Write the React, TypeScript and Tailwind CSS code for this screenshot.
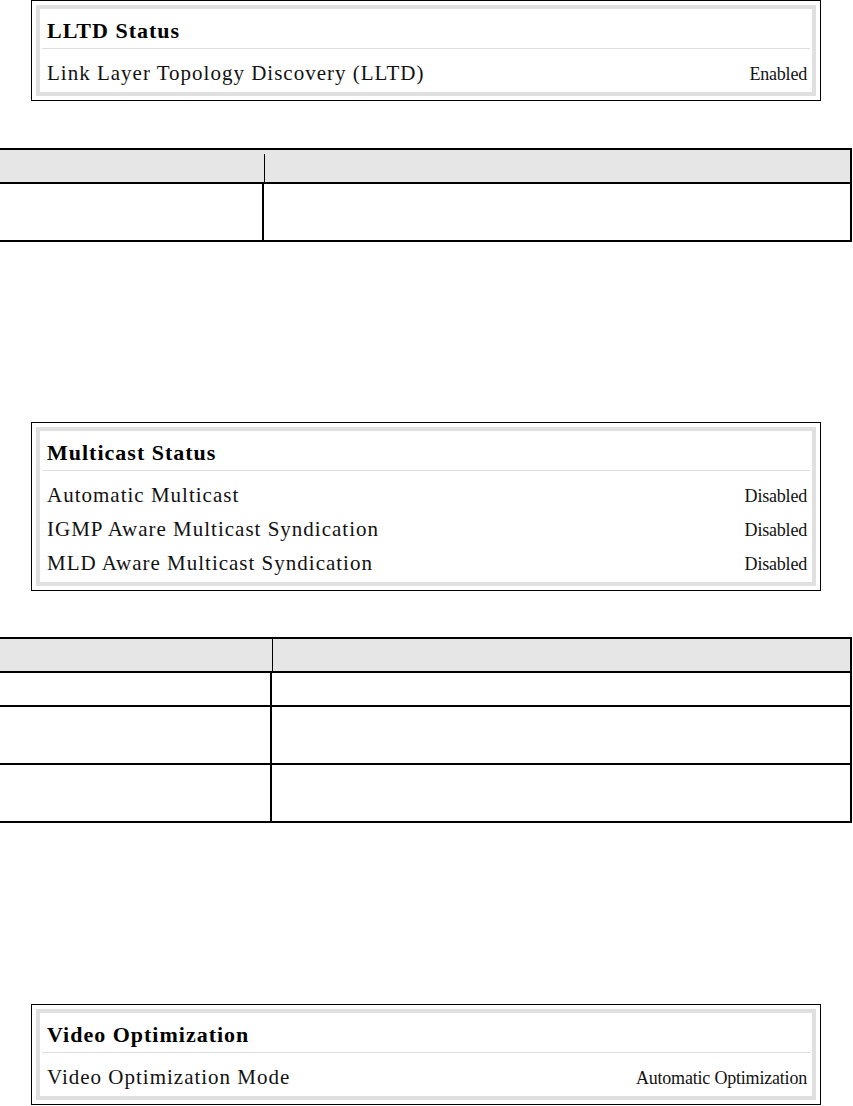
const serif = "font-['Liberation_Serif','Times_New_Roman',serif]";

type Row = { label: string; value: string };

function StatusPanel({ title, rows, className = "" }: { title: string; rows: Row[]; className?: string }) {
  return (
    <div className={`ml-[31px] w-[790px] border border-black bg-white p-1 ${serif} ${className}`}>
      <div className="border-4 border-[#e0e0e0] bg-white">
        <div className="flex h-[39px] items-center px-[7px] pt-[3px] text-[22px] font-bold tracking-[1px] text-black">
          {title}
        </div>
        <div className="mx-[2px] h-px bg-[#dedede]" />
        <div className="pt-[8px] pb-[1px]">
          {rows.map((row) => (
            <div key={row.label} className="flex h-[34px] items-center justify-between pl-[7px] pr-[5px]">
              <span className="text-[21px] tracking-[1px] text-[#111]">{row.label}</span>
              <span className="text-[18px] tracking-[-0.2px] text-[#111]">{row.value}</span>
            </div>
          ))}
        </div>
      </div>
    </div>
  );
}

function EmptyTable({
  split,
  bodyRows,
  shortDivider = false,
  className = "",
}: {
  split: number;
  bodyRows: number[];
  shortDivider?: boolean;
  className?: string;
}) {
  return (
    <div className={`w-[852px] border-y-2 border-r-2 border-black ${className}`}>
      <div className="flex h-[32px] bg-[#e6e6e6]">
        <div style={{ width: split + 1 }} />
        <div className={`flex-1 border-l border-black ${shortDivider ? "mt-[4px]" : ""}`} />
      </div>
      {bodyRows.map((h, i) => (
        <div key={i} className="flex border-t-2 border-black bg-white" style={{ height: h + 2 }}>
          <div style={{ width: split - 1 }} />
          <div className="flex-1 border-l-2 border-black" />
        </div>
      ))}
    </div>
  );
}

export default function App() {
  return (
    <div className="h-[1106px] w-[853px] overflow-hidden bg-white">
      <StatusPanel
        title="LLTD Status"
        rows={[{ label: "Link Layer Topology Discovery (LLTD)", value: "Enabled" }]}
      />

      <EmptyTable className="mt-[47px]" split={263} bodyRows={[56]} shortDivider />

      <StatusPanel
        className="mt-[180px]"
        title="Multicast Status"
        rows={[
          { label: "Automatic Multicast", value: "Disabled" },
          { label: "IGMP Aware Multicast Syndication", value: "Disabled" },
          { label: "MLD Aware Multicast Syndication", value: "Disabled" },
        ]}
      />

      <EmptyTable className="mt-[46px]" split={271} bodyRows={[32, 56, 56]} />

      <StatusPanel
        className="mt-[181px]"
        title="Video Optimization"
        rows={[{ label: "Video Optimization Mode", value: "Automatic Optimization" }]}
      />
    </div>
  );
}
